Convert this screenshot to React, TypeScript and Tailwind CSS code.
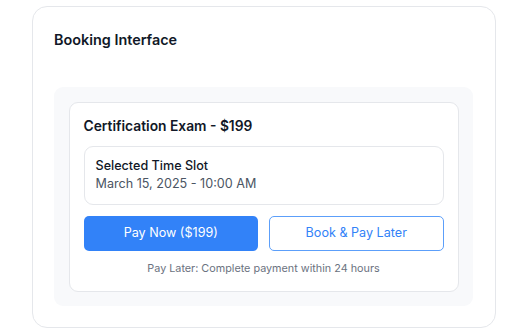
export default function App() {
  return (
    <div className="min-h-screen bg-white pl-[32px] pt-[6px] font-['Inter',sans-serif]">
      <div className="w-[464px] h-[322px] rounded-[15px] border border-[#e5e7eb] bg-white pl-[21px] pr-[22px] pt-[20px]">
        <h2 className="text-[14.4px] leading-[25px] font-semibold text-[#111827]">Booking Interface</h2>

        <div className="mt-[35px] rounded-[9px] bg-[#f8f9fb] p-[14.5px]">
          <div className="rounded-[9px] border border-[#e5e7eb] bg-white px-[14px] pt-[13px] pb-[14px]">
            <h3 className="text-[13.8px] leading-[20px] font-semibold text-[#111827]">Certification Exam - $199</h3>

            <div className="mt-[10px] rounded-[9px] border border-[#e5e7eb] px-[11px] py-[10.8px]">
              <p className="text-[12.6px] leading-[18px] font-medium text-[#111827]">Selected Time Slot</p>
              <p className="text-[12.6px] leading-[18px] text-[#4b5563]">March 15, 2025 - 10:00 AM</p>
            </div>

            <div className="mt-[11px] grid grid-cols-2 gap-[11px]">
              <button className="h-[35px] rounded-[5px] bg-[#3282f8] text-[12.6px] text-white">Pay Now ($199)</button>
              <button className="h-[35px] rounded-[5px] border border-[#5c9ffa] bg-white text-[12.6px] text-[#3282f8]">
                Book &amp; Pay Later
              </button>
            </div>

            <p className="mt-[11px] text-center text-[10.8px] leading-[14.4px] text-[#6b7280]">
              Pay Later: Complete payment within 24 hours
            </p>
          </div>
        </div>
      </div>
    </div>
  );
}
